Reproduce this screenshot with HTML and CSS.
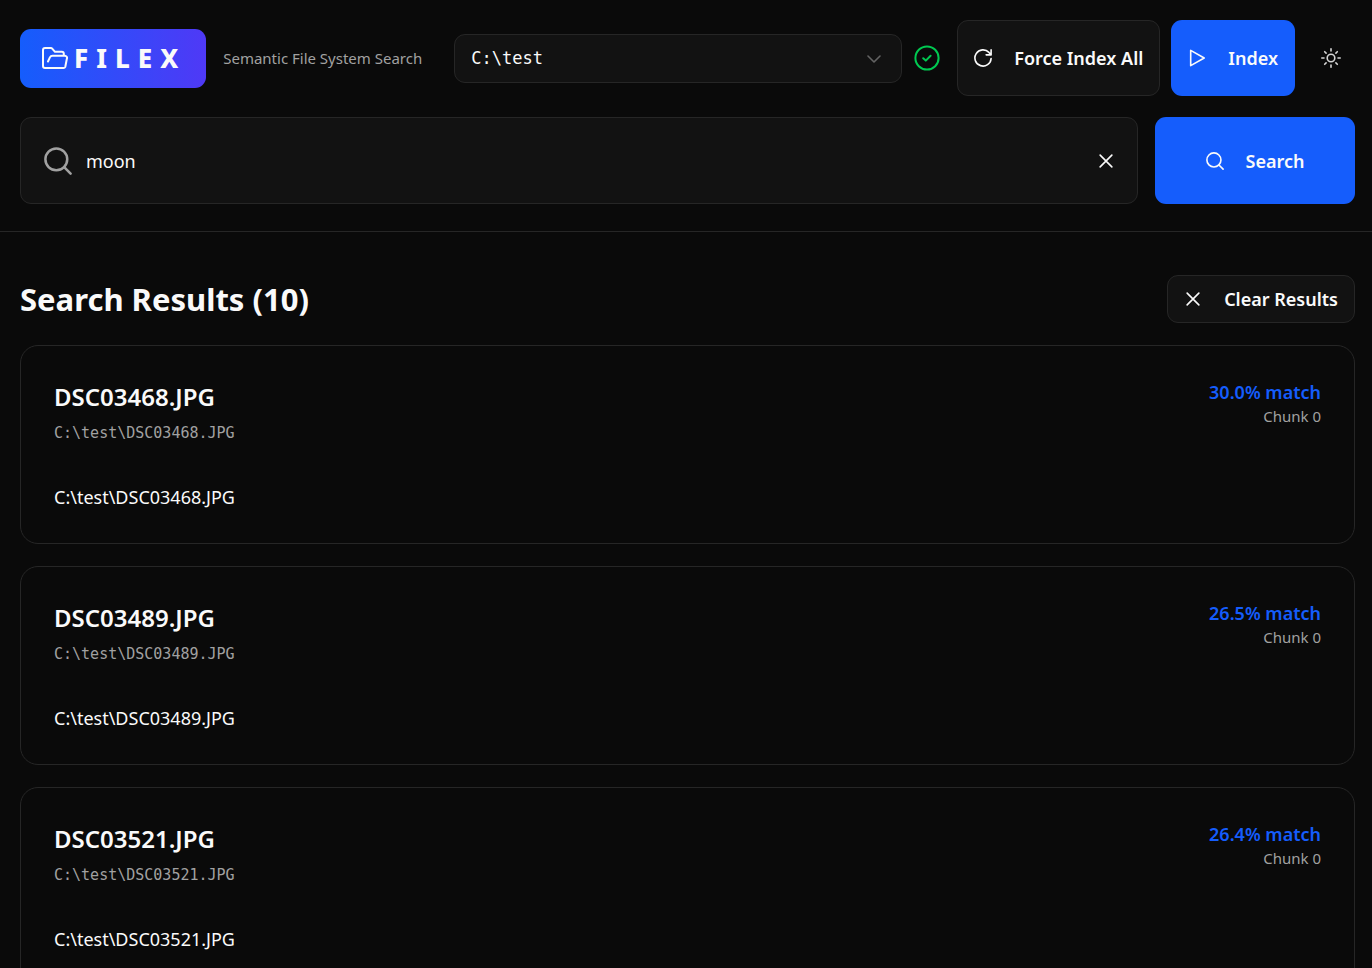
FILE: index.html
```html
<!DOCTYPE html>
<html lang="en">
<head>
    <meta charset="UTF-8">
    <meta name="viewport" content="width=device-width, initial-scale=1.0">
    <title>FileX</title>
    <link rel="stylesheet" href="styles.css">
</head>
<body>
    <!-- Shared icons -->
    <svg class="icon-defs" aria-hidden="true">
        <symbol id="icon-search" viewBox="0 0 20 20">
            <circle cx="8.8" cy="8.8" r="7.8"/>
            <path d="M14.4 14.4L19 19"/>
        </symbol>
        <symbol id="icon-times" viewBox="0 0 20 20">
            <path d="M3.5 3.5l13 13M16.5 3.5l-13 13"/>
        </symbol>
    </svg>

    <header class="header">
        <div class="toolbar">
            <div class="logo">
                <svg class="logo-icon" viewBox="0 0 26 22" aria-hidden="true">
                    <path d="M21.8 8.8V6.8a2 2 0 0 0-2-2H13L10.2 1.6A1.8 1.8 0 0 0 8.8 1H3a2 2 0 0 0-2 2v16a2 2 0 0 0 2 2h18.5a2 2 0 0 0 1.8-1.2L24.8 12a2.2 2.2 0 0 0-2-3.2H10.5a3 3 0 0 0-2.6 1.6L6 14.5"/>
                </svg>
                <span class="logo-text">FILEX</span>
            </div>
            <span class="tagline">Semantic File System Search</span>

            <div class="path-picker">
                <select class="path-select" aria-label="Indexed path">
                    <option>C:\test</option>
                </select>
                <svg class="chevron" viewBox="0 0 14 8" aria-hidden="true"><path d="M1 1l6 6 6-6"/></svg>
            </div>
            <svg class="status-icon" viewBox="0 0 26 26" role="img" aria-label="Path is valid">
                <circle cx="13" cy="13" r="11.6"/>
                <path d="M9.2 13.2l2.6 2.4 4.8-4.8"/>
            </svg>

            <div class="actions">
                <button type="button" class="btn btn-secondary btn-tall">
                    <svg class="icon" viewBox="0 0 20 20" aria-hidden="true"><path d="M19 10.5a9 9 0 1 1-2.4-6.7L19 6.5M19 1v5.5h-5.5"/></svg>
                    <span>Force Index All</span>
                </button>
                <button type="button" class="btn btn-primary btn-tall">
                    <svg class="icon" viewBox="0 0 20 20" aria-hidden="true"><path d="M3 1.5v17L18 10z"/></svg>
                    <span>Index</span>
                </button>
                <button type="button" class="theme-btn" aria-label="Toggle theme">
                    <svg class="sun-icon" viewBox="0 0 20 20" aria-hidden="true">
                        <circle cx="10" cy="10" r="3.8"/>
                        <path d="M10 .8v2.2M10 17v2.2M.8 10H3M17 10h2.2M3.7 3.7l1.4 1.4M14.9 14.9l1.4 1.4M3.7 16.3l1.4-1.4M14.9 5.1l1.4-1.4"/>
                    </svg>
                </button>
            </div>
        </div>

        <form class="search-form">
            <div class="search-box">
                <svg class="search-icon" viewBox="0 0 20 20" aria-hidden="true"><use href="#icon-search"/></svg>
                <input type="text" class="search-input" value="moon" aria-label="Search query">
                <button type="button" class="clear-btn" aria-label="Clear search">
                    <svg class="icon" aria-hidden="true"><use href="#icon-times"/></svg>
                </button>
            </div>
            <button type="submit" class="btn btn-primary search-btn">
                <svg class="icon" aria-hidden="true"><use href="#icon-search"/></svg>
                <span>Search</span>
            </button>
        </form>
    </header>

    <main class="results">
        <div class="results-header">
            <h1 class="results-title">Search Results (10)</h1>
            <button type="button" class="btn btn-secondary">
                <svg class="icon" aria-hidden="true"><use href="#icon-times"/></svg>
                <span>Clear Results</span>
            </button>
        </div>

        <article class="card">
            <div class="card-header">
                <div>
                    <h2 class="file-name">DSC03468.JPG</h2>
                    <p class="file-path">C:\test\DSC03468.JPG</p>
                </div>
                <div class="score">
                    <div class="match">30.0% match</div>
                    <div class="chunk">Chunk 0</div>
                </div>
            </div>
            <p class="content">C:\test\DSC03468.JPG</p>
        </article>

        <article class="card">
            <div class="card-header">
                <div>
                    <h2 class="file-name">DSC03489.JPG</h2>
                    <p class="file-path">C:\test\DSC03489.JPG</p>
                </div>
                <div class="score">
                    <div class="match">26.5% match</div>
                    <div class="chunk">Chunk 0</div>
                </div>
            </div>
            <p class="content">C:\test\DSC03489.JPG</p>
        </article>

        <article class="card">
            <div class="card-header">
                <div>
                    <h2 class="file-name">DSC03521.JPG</h2>
                    <p class="file-path">C:\test\DSC03521.JPG</p>
                </div>
                <div class="score">
                    <div class="match">26.4% match</div>
                    <div class="chunk">Chunk 0</div>
                </div>
            </div>
            <p class="content">C:\test\DSC03521.JPG</p>
        </article>
    </main>
</body>
</html>
```
FILE: styles.css
```css
* {
    box-sizing: border-box;
}

html {
    scrollbar-width: none;
}

body {
    margin: 0;
    background: #0a0a0a;
    color: #fafafa;
    font-family: "Segoe UI", "Noto Sans", sans-serif;
    font-size: 18px;
}

h1, h2, p {
    margin: 0;
}

button, input, select {
    font: inherit;
    color: inherit;
}

svg {
    flex: none;
    fill: none;
    stroke: currentColor;
    stroke-linecap: round;
    stroke-linejoin: round;
}

.icon-defs {
    position: absolute;
    width: 0;
    height: 0;
}

.icon {
    width: 18px;
    height: 18px;
    stroke-width: 1.8;
}

.sun-icon {
    width: 20px;
    height: 20px;
    color: #d4d4d4;
    stroke-width: 1.6;
}

/* Header */
.header {
    padding: 20px 17px 27px 20px;
    border-bottom: 1px solid #262626;
}

.toolbar {
    display: flex;
    align-items: center;
    margin-bottom: 21px;
}

.logo {
    display: flex;
    align-items: center;
    gap: 6px;
    height: 59px;
    padding: 0 20px 0 22px;
    border-radius: 11px;
    background: linear-gradient(90deg, #155dfc, #4f39f6);
}

.logo-icon {
    width: 26px;
    height: 22px;
    stroke-width: 2;
}

.logo-text {
    font-size: 26px;
    font-weight: 800;
    letter-spacing: 8px;
    line-height: 32px;
}

.tagline {
    margin-left: 17px;
    color: #a1a1a1;
    font-size: 15px;
    white-space: nowrap;
}

.path-picker {
    position: relative;
    flex: 1;
    margin-left: 32px;
}

.path-select {
    display: block;
    width: 100%;
    height: 49px;
    padding: 0 16px;
    appearance: none;
    border: 1px solid #262626;
    border-radius: 11px;
    background: #121212;
    font-family: "DejaVu Sans Mono", monospace;
    font-size: 17px;
}

.chevron {
    position: absolute;
    top: 21px;
    right: 21px;
    width: 14px;
    height: 8px;
    color: #636363;
    stroke-width: 1.6;
    pointer-events: none;
}

.status-icon {
    width: 26px;
    height: 26px;
    margin: 0 17px 0 12px;
    color: #00c951;
    stroke-width: 2;
}

.actions {
    display: flex;
    align-items: center;
    gap: 11px;
}

.btn {
    display: flex;
    align-items: center;
    justify-content: center;
    gap: 22px;
    height: 48px;
    padding: 0 16px;
    border: 1px solid transparent;
    border-radius: 11px;
    font-weight: 600;
    white-space: nowrap;
    cursor: pointer;
}

.btn-tall {
    height: 76px;
}

.btn-primary {
    background: #155dfc;
}

.btn-secondary {
    border-color: #262626;
    background: #121212;
}

.theme-btn {
    display: flex;
    align-items: center;
    justify-content: center;
    width: 49px;
    height: 49px;
    padding: 0;
    border: 0;
    background: none;
    cursor: pointer;
}

/* Search */
.search-form {
    display: flex;
    gap: 17px;
}

.search-box {
    display: flex;
    flex: 1;
    align-items: center;
    gap: 14px;
    height: 87px;
    padding: 0 22px 0 23px;
    border: 1px solid #262626;
    border-radius: 11px;
    background: #121212;
}

.search-icon {
    width: 28px;
    height: 28px;
    color: #a1a1a1;
    stroke-width: 1.8;
}

.search-input {
    flex: 1;
    min-width: 0;
    padding: 0;
    border: 0;
    outline: none;
    background: none;
}

.clear-btn {
    display: flex;
    padding: 0;
    border: 0;
    background: none;
    cursor: pointer;
}

.search-btn {
    width: 200px;
    height: 87px;
}

/* Results */
.results {
    padding: 43px 17px 22px 20px;
}

.results-header {
    display: flex;
    align-items: center;
    justify-content: space-between;
    margin-bottom: 22px;
}

.results-title {
    font-size: 31px;
    font-weight: 700;
    line-height: 48px;
}

.card {
    margin-bottom: 22px;
    padding: 33px;
    border: 1px solid #262626;
    border-radius: 18px;
}

.card-header {
    display: flex;
    justify-content: space-between;
    margin-bottom: 34px;
}

.file-name {
    font-size: 24px;
    font-weight: 600;
    line-height: 36px;
}

.file-path {
    color: #a1a1a1;
    font-family: "DejaVu Sans Mono", monospace;
    font-size: 15px;
    line-height: 36px;
}

.score {
    text-align: right;
}

.match {
    color: #155dfc;
    font-weight: 600;
    line-height: 26px;
}

.chunk {
    color: #a1a1a1;
    font-size: 15px;
    line-height: 22px;
}

.content {
    line-height: 25px;
}
```
